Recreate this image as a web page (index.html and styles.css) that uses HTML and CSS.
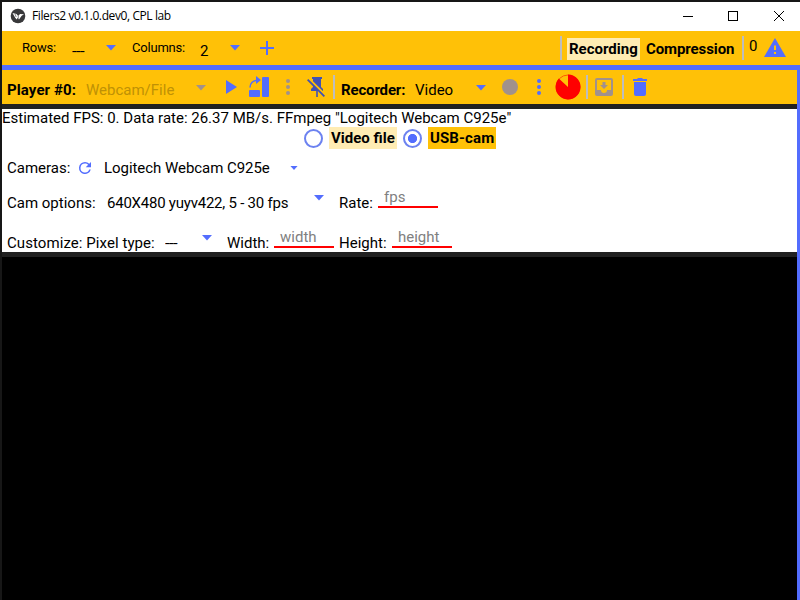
FILE: index.html
```
<!DOCTYPE html>
<html lang="en">
<head>
<meta charset="utf-8">
<title>Filers2 v0.1.0.dev0, CPL lab</title>
<link rel="stylesheet" href="styles.css">
</head>
<body>
<div class="window">
  <header class="titlebar">
    <svg class="logo" width="16" height="16" viewBox="0 0 16 16"><circle cx="8" cy="8" r="7.3" fill="#38383a"/><path d="M2.500 5l4 1 1.700 2L10 6l4 .2-2.300 1.600L9 11.500 7.700 9.800l-1 1.700-1.500-1.700z" fill="#fff"/><path d="M5 6l1.200 3M8.300 8v2.500" stroke="#38383a" stroke-width=".6"/></svg>
    <span class="title">Filers2 v0.1.0.dev0, CPL lab</span>
    <svg class="controls" width="110" height="14" viewBox="0 0 110 14" fill="none" stroke="#000" shape-rendering="crispEdges"><path d="M3 7.500h10M48.500 2.500h9v9h-9z"/><path d="M94 2l10 10M104 2l-10 10" shape-rendering="auto"/></svg>
  </header>

  <nav class="bar settings">
    <span class="small">Rows:</span>
    <span class="low dashes">---</span>
    <i class="caret"></i>
    <span class="small">Columns:</span>
    <span class="low">2</span>
    <i class="caret"></i>
    <svg width="14" height="14" viewBox="0 0 14 14"><path d="M7 0v14M0 7h14" stroke="#536dfe" stroke-width="2"/></svg>
    <i class="divider"></i>
    <b class="chip pale">Recording</b>
    <b class="chip wide">Compression</b>
    <i class="divider"></i>
    <span class="high">0</span>
    <svg class="alert" width="22" height="19" viewBox="0 0 22 19"><path fill="#536dfe" d="M11 0l11 19H0z"/><path fill="#ffc107" d="M10 7.500h2v4.500h-2zM10 14h2v2h-2z"/></svg>
  </nav>

  <main class="workspace">
    <section class="bar player">
      <b>Player #0:</b>
      <span class="muted">Webcam/File</span>
      <i class="caret off"></i>
      <svg width="12" height="14" viewBox="0 0 12 14"><path fill="#536dfe" d="M0 0l11 7-11 7z"/></svg>
      <svg width="20" height="20" viewBox="0 0 20 20"><g fill="#536dfe"><rect y="13" width="11" height="7" rx="1"/><rect x="13" width="7" height="20" rx="1"/><path d="M7 -1l5 4-5 4z"/></g><path d="M1 10.500C1 6 4 3.300 9 3.300" fill="none" stroke="#536dfe" stroke-width="1.500"/></svg>
      <svg width="4" height="16" viewBox="0 0 4 16" fill="#a1918c"><circle cx="2" cy="2" r="2"/><circle cx="2" cy="8" r="2"/><circle cx="2" cy="14" r="2"/></svg>
      <svg width="18" height="20" viewBox="2 2 18 20"><path fill="#3f51b5" d="M2 5.270L3.280 4 20 20.720 18.730 22l-5.930-5.930V22h-1.600v-6H6v-2l2-2v-.730l-6-6M16 12l2 2v2h-.180L8 6.180V4H7V2h10v2h-1v8z"/></svg>
      <i class="divider"></i>
      <b class="recorder">Recorder:</b>
      <span>Video</span>
      <i class="caret"></i>
      <i class="record"></i>
      <svg width="4" height="16" viewBox="0 0 4 16" fill="#536dfe"><circle cx="2" cy="2" r="2"/><circle cx="2" cy="8" r="2"/><circle cx="2" cy="14" r="2"/></svg>
      <svg width="26" height="26" viewBox="0 0 26 26"><circle cx="13" cy="13" r="12" fill="none" stroke="#ff5a04" stroke-width="1"/><path fill="#f00" d="M13 13V.5A12.500 12.500 0 1 1 3.800 4.600z"/></svg>
      <i class="divider"></i>
      <svg width="18" height="18" viewBox="0 0 18 18"><path fill="#a1918c" fill-rule="evenodd" d="M2 0h14a2 2 0 0 1 2 2v14a2 2 0 0 1-2 2H2a2 2 0 0 1-2-2V2a2 2 0 0 1 2-2zM2 2v10h4a3 3 0 0 0 6 0h4V2zM7.500 4h3v3H13L9 11 5 7h2.500z"/></svg>
      <i class="divider"></i>
      <svg width="14" height="18" viewBox="0 0 14 18" fill="#536dfe"><path d="M0 1h4l1-1h4l1 1h4v2H0zM1 4h12v12a2 2 0 0 1-2 2H3a2 2 0 0 1-2-2z"/></svg>
    </section>

    <section class="panel">
      <p class="status">Estimated FPS: 0. Data rate: 26.37 MB/s. FFmpeg "Logitech Webcam C925e"</p>
      <div class="sources">
        <i class="radio"></i><b class="chip pale">Video file</b>
        <i class="radio on"></i><b class="chip amber">USB-cam</b>
      </div>
      <div class="row cameras">
        <span>Cameras:</span>
        <svg width="12" height="12" viewBox="4 4 16 16"><path fill="#536dfe" d="M17.650 6.350A7.960 7.960 0 0 0 12 4a8 8 0 1 0 7.730 10h-2.080A6 6 0 1 1 12 6c1.660 0 3.140.690 4.220 1.780L13 11h7V4l-2.350 2.350z"/></svg>
        <span class="device">Logitech Webcam C925e</span>
        <i class="caret tiny"></i>
      </div>
      <div class="row options">
        <span>Cam options:</span>
        <span class="mode">640X480 yuyv422, 5 - 30 fps</span>
        <i class="caret"></i>
        <span>Rate:</span>
        <span class="field">fps</span>
      </div>
      <div class="row custom">
        <span class="pixel">Customize: Pixel type:</span>
        <span class="dashes">---</span>
        <i class="caret"></i>
        <span>Width:</span>
        <span class="field">width</span>
        <span>Height:</span>
        <span class="field">height</span>
      </div>
    </section>
    <section class="video"></section>
  </main>
</div>
</body>
</html>
```
FILE: styles.css
```
* { box-sizing: border-box; }
body { margin: 0; background: #000; }
.window {
  width: 800px;
  height: 600px;
  display: flex;
  flex-direction: column;
  overflow: hidden;
  border-top: 2px solid #171717;
  border-left: 2px solid #171717;
  font: 15px/18px Roboto, sans-serif;
  color: #000;
  white-space: nowrap;
}
svg { display: block; overflow: visible; }
.titlebar {
  height: 29px;
  flex: none;
  display: flex;
  align-items: center;
  padding: 0 10px 2px 8px;
  background: #fff;
  font: 12px/16px "Open Sans", sans-serif;
}
.title { margin-left: 6px; letter-spacing: -0.4px; }
.controls { margin-left: auto; }

.bar { display: grid; align-items: center; background: #ffc107; height: 34px; }
.settings {
  flex: none;
  padding-left: 20px;
  grid-template-columns: 50px 34px 26px 68px 30px 30px 300px 7px 77px 98px 7px 15px 22px;
}
.small { font-size: 13px; letter-spacing: -0.2px; }
.low { padding-top: 5px; }
.high { padding-bottom: 4px; }
.alert { margin-bottom: 1px; }
.dashes { letter-spacing: -0.6px; transform: scaleX(1.12); transform-origin: left; justify-self: start; }
.caret {
  width: 10px;
  height: 6px;
  background: #536dfe;
  clip-path: polygon(0 0, 100% 0, 50% 90%);
}
.off { background: #a1918c; }
.tiny { width: 8px; height: 5px; }
.divider { width: 2px; height: 24px; background: #bdbdbd; }
.chip { justify-self: start; height: 22px; line-height: 22px; padding: 0 2px; }
.settings .chip { margin-top: 2px; }
.settings .wide { letter-spacing: -0.1px; }
.pale { background: #ffecb3; }
.amber { background: #ffc107; letter-spacing: 0.12px; }

.workspace {
  flex: 1;
  display: flex;
  flex-direction: column;
  border-top: 5px solid #536dfe;
  border-right: 3px solid #536dfe;
}
.player {
  flex: none;
  padding-left: 5px;
  grid-template-columns: 79px 110px 30px 23px 37px 21px 26px 8px 74px 61px 26px 35px 18px 31px 9px 27px 11px 14px;
}
.player .caret { margin-top: 2px; }
.player > b, .player > span { padding-top: 5px; }
.player > b { letter-spacing: 0.1px; }
.player > .recorder { letter-spacing: -0.15px; }
.muted { color: #c09105; }
.record { width: 16px; height: 16px; border-radius: 50%; background: #a1918c; }

.panel {
  flex: none;
  height: 153px;
  border: solid #212121;
  border-width: 5px 0;
  background: #fff;
}
.status { margin: 0; height: 18px; }
.sources {
  display: grid;
  grid-template-columns: 25px 74px 25px auto;
  align-items: center;
  padding-left: 302px;
  height: 22px;
}
.radio {
  width: 19px;
  height: 19px;
  border: 2px solid #6c82f0;
  border-radius: 50%;
}
.on { background: radial-gradient(circle, #536dfe 4.2px, transparent 5px); }
.row { display: grid; align-items: center; padding-left: 5px; height: 40px; }
.cameras { grid-template-columns: 72px 25px 186px 8px; height: 38px; }
.device { letter-spacing: -0.05px; }
.mode { letter-spacing: -0.23px; }
.pixel { letter-spacing: 0.07px; }
.options { grid-template-columns: 100px 207px 25px 39px 60px; height: 32px; }
.options .caret, .custom .caret { margin-bottom: 10px; }
.custom { grid-template-columns: 158px 37px 25px 47px 65px 53px 60px; height: 38px; margin-top: 1px; padding-top: 8px; }
.field {
  width: 60px;
  height: 20px;
  margin-bottom: 10px;
  padding-left: 6px;
  border-bottom: 2px solid #f00;
  color: #808080;
}
.video { flex: 1; background: #000; }
```
